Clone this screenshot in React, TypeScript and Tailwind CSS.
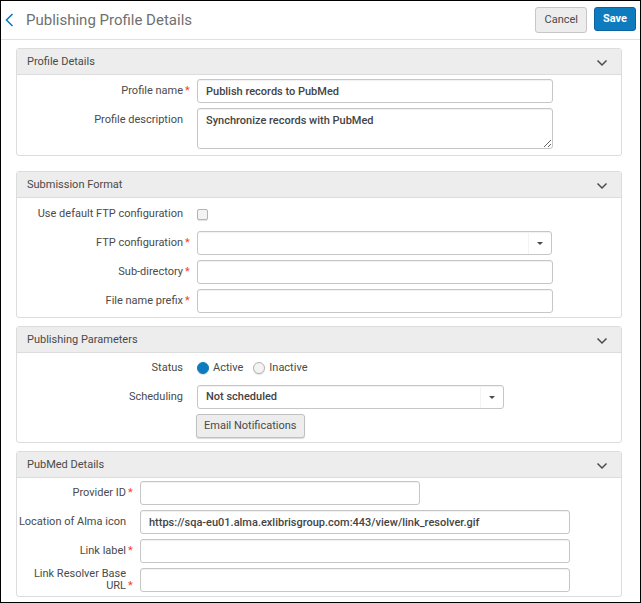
import React, { useState } from 'react';
import { clsx } from 'clsx';

const inputClass =
  'h-6 w-full rounded-[3px] border border-[#c6c6c6] bg-white px-2 text-[11px] font-medium text-[#444444] shadow-[inset_0_1px_1px_rgba(0,0,0,0.06)] focus:border-[#0f7bbf] focus:outline-none';

const choiceClass =
  'appearance-none border border-[#b4b4b4] bg-[#f3f3f3] shadow-[0_1px_1px_rgba(0,0,0,0.12)] checked:border-[#0f7bbf] checked:bg-[#0f7bbf]';

interface PanelProps {
  title: string;
  className?: string;
  children: React.ReactNode;
}

function Panel({ title, className, children }: PanelProps) {
  const [open, setOpen] = useState(true);

  return (
    <section className={clsx('rounded-[3px] border border-[#dcdcdc]', className)}>
      <div className="flex h-[26px] items-center justify-between border-b border-[#dcdcdc] bg-[#ededed] pl-[10px] pr-[13px]">
        <h2 className="text-[11px] leading-[14px]">{title}</h2>
        <button type="button" aria-label={title} aria-expanded={open} onClick={() => setOpen(!open)} className="pt-[3px]">
          <svg className="block" width="12" height="8" viewBox="0 0 12 8" fill="none" stroke="#4a4a4a" strokeWidth="1.5">
            <path d="M1.5 1.5 6 6l4.500-4.500" />
          </svg>
        </button>
      </div>
      {open && <div className="flex flex-col gap-[5px] pb-1 pt-[3px]">{children}</div>}
    </section>
  );
}

interface RowProps {
  label: string;
  htmlFor?: string;
  required?: boolean;
  narrow?: boolean;
  className?: string;
  children: React.ReactNode;
}

function Row({ label, htmlFor, required = false, narrow = false, className, children }: RowProps) {
  return (
    <div className={clsx('flex items-start', className)}>
      <label
        htmlFor={htmlFor}
        className={clsx('flex h-6 shrink-0 items-center justify-end text-right leading-3', narrow ? 'w-[123px]' : 'w-[180px]')}
      >
        <span className="flex items-end">
          {label}
          {/* keeps its width when empty so that all labels end on one line */}
          <span className="w-[14px] shrink-0 pl-[2px] text-left text-[#ff3b2c]">{required && '*'}</span>
        </span>
      </label>
      <div className="min-w-0 flex-1">{children}</div>
    </div>
  );
}

interface SelectFieldProps {
  id: string;
  options: string[];
}

function SelectField({ id, options }: SelectFieldProps) {
  return (
    <div className="relative">
      <select id={id} className={clsx(inputClass, 'block appearance-none')}>
        {options.map((option) => (
          <option key={option} value={option}>
            {option}
          </option>
        ))}
      </select>
      <span className="pointer-events-none absolute inset-y-px right-px flex w-[23px] items-center justify-center border-l border-[#f3f3f3]">
        <svg width="6" height="3" viewBox="0 0 6 3" fill="#4a4a4a">
          <path d="M0 0h6L3 3z" />
        </svg>
      </span>
    </div>
  );
}

export default function App() {
  const [status, setStatus] = useState('Active');

  return (
    <main className="min-h-screen border border-black bg-white font-['Roboto',sans-serif] text-[11px] text-[#4a4a4a]">
      <header className="flex h-[39px] items-start justify-between border-b border-[#e0e0e0] pl-1 pr-1 pt-[6px]">
        <div className="flex h-[26px] items-center gap-3">
          <a href="#back" aria-label="Back">
            <svg width="9" height="14" viewBox="0 0 9 14" fill="none" stroke="#0f7bbf" strokeWidth="1.6">
              <path d="M7.500 1 1.500 7l6 6" />
            </svg>
          </a>
          <h1 className="text-[15px] text-[#707070]">Publishing Profile Details</h1>
        </div>
        <div className="flex items-start gap-[7px]">
          <button type="button" className="h-[26px] rounded-[3px] border border-[#c6c6c6] bg-[#ededed] px-2">
            Cancel
          </button>
          <button type="button" className="h-6 rounded-[3px] border border-[#0a62a0] bg-[#0f7bbf] px-2 font-bold text-white">
            Save
          </button>
        </div>
      </header>

      <form className="pb-[5px] pl-[15px] pr-[18px] pt-2" onSubmit={(e) => e.preventDefault()}>
        <Panel title="Profile Details">
          <Row label="Profile name" htmlFor="profile-name" required className="pt-px pr-[68px]">
            <input id="profile-name" type="text" defaultValue="Publish records to PubMed" className={clsx(inputClass, 'block')} />
          </Row>
          <Row label="Profile description" htmlFor="profile-description" className="pb-[2px] pr-[68px]">
            <textarea
              id="profile-description"
              defaultValue="Synchronize records with PubMed"
              className={clsx(inputClass, 'block h-[41px] resize py-[5px] leading-[14px]')}
            />
          </Row>
        </Panel>

        <Panel title="Submission Format" className="mt-[15px]">
          <Row label="Use default FTP configuration" htmlFor="default-ftp" className="pt-px">
            <div className="flex h-6 items-center">
              <input id="default-ftp" type="checkbox" className={clsx(choiceClass, 'size-[11px] rounded-[2px]')} />
            </div>
          </Row>
          <Row label="FTP configuration" htmlFor="ftp-configuration" required className="pr-[69px]">
            <SelectField id="ftp-configuration" options={['']} />
          </Row>
          <Row label="Sub-directory" htmlFor="sub-directory" required className="pr-[68px]">
            <input id="sub-directory" type="text" className={clsx(inputClass, 'block')} />
          </Row>
          <Row label="File name prefix" htmlFor="file-prefix" required className="pr-[68px]">
            <input id="file-prefix" type="text" className={clsx(inputClass, 'block')} />
          </Row>
        </Panel>

        <Panel title="Publishing Parameters" className="mt-2">
          <Row label="Status">
            <div className="flex h-6 items-center gap-[10px]">
              {['Active', 'Inactive'].map((option) => (
                <label key={option} className="flex items-center gap-1">
                  <input
                    type="radio"
                    name="status"
                    value={option}
                    checked={status === option}
                    onChange={() => setStatus(option)}
                    className={clsx(choiceClass, 'size-3 rounded-full')}
                  />
                  {option}
                </label>
              ))}
            </div>
          </Row>
          <Row label="Scheduling" htmlFor="scheduling" className="pr-[117px]">
            <SelectField id="scheduling" options={['Not scheduled']} />
          </Row>
          <div className="pl-[179px]">
            <button
              type="button"
              className="block h-6 rounded-[3px] border border-[#c0c0c0] bg-[#ededed] px-[7px] shadow-[0_1px_1px_rgba(0,0,0,0.15)]"
            >
              Email Notifications
            </button>
          </div>
        </Panel>

        <Panel title="PubMed Details" className="mt-2">
          <Row label="Provider ID" htmlFor="provider-id" required narrow className="pr-[201px]">
            <input id="provider-id" type="text" className={clsx(inputClass, 'block')} />
          </Row>
          <Row label="Location of Alma icon" htmlFor="icon-location" narrow className="pr-[51px]">
            <input
              id="icon-location"
              type="text"
              defaultValue="https://sqa-eu01.alma.exlibrisgroup.com:443/view/link_resolver.gif"
              className={clsx(inputClass, 'block')}
            />
          </Row>
          <Row label="Link label" htmlFor="link-label" required narrow className="pr-[51px]">
            <input id="link-label" type="text" className={clsx(inputClass, 'block')} />
          </Row>
          <Row label="Link Resolver Base URL" htmlFor="resolver-url" required narrow className="pr-[51px]">
            <input id="resolver-url" type="text" className={clsx(inputClass, 'block')} />
          </Row>
        </Panel>
      </form>
    </main>
  );
}
